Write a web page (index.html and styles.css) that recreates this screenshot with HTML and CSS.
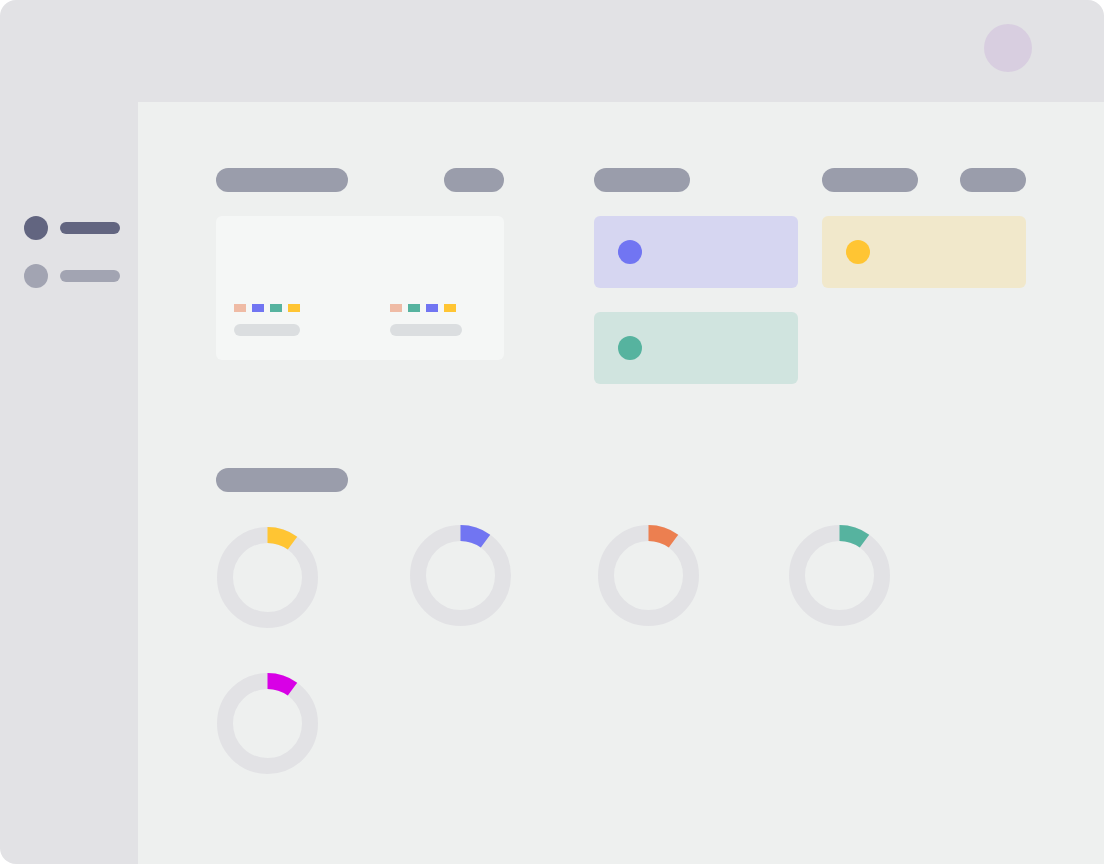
FILE: index.html
```html
<!DOCTYPE html>
<html lang="en">

<head>
    <meta charset="UTF-8">
    <meta name="viewport" content="width=device-width, initial-scale=1.0">
    <title>Dashboard</title>
    <link rel="stylesheet" href="styles.css">
</head>

<body>
    <div class="app">
        <header class="topbar">
            <div class="avatar"></div>
        </header>

        <nav class="sidebar">
            <div class="nav-item active">
                <span class="nav-dot"></span>
                <span class="nav-line"></span>
            </div>
            <div class="nav-item">
                <span class="nav-dot"></span>
                <span class="nav-line"></span>
            </div>
        </nav>

        <main class="main">
            <section class="overview">
                <div class="col col-wide">
                    <div class="col-head">
                        <span class="pill pill-lg"></span>
                        <span class="pill pill-sm"></span>
                    </div>
                    <div class="legend-card">
                        <div class="legend">
                            <div class="swatches">
                                <span class="swatch salmon"></span>
                                <span class="swatch blue"></span>
                                <span class="swatch green"></span>
                                <span class="swatch yellow"></span>
                            </div>
                            <span class="legend-line"></span>
                        </div>
                        <div class="legend">
                            <div class="swatches">
                                <span class="swatch salmon"></span>
                                <span class="swatch green"></span>
                                <span class="swatch blue"></span>
                                <span class="swatch yellow"></span>
                            </div>
                            <span class="legend-line legend-line-wide"></span>
                        </div>
                    </div>
                </div>

                <div class="col">
                    <div class="col-head">
                        <span class="pill pill-md"></span>
                    </div>
                    <div class="stat-card stat-blue"><span class="stat-dot"></span></div>
                    <div class="stat-card stat-green"><span class="stat-dot"></span></div>
                </div>

                <div class="col">
                    <div class="col-head">
                        <span class="pill pill-md"></span>
                        <span class="pill pill-xs"></span>
                    </div>
                    <div class="stat-card stat-yellow"><span class="stat-dot"></span></div>
                </div>
            </section>

            <section class="progress">
                <span class="pill pill-lg"></span>
                <div class="donuts">
                    <svg class="donut donut-yellow first" viewBox="0 0 101 101">
                        <circle class="track" cx="50.5" cy="50.5" r="42.5"></circle>
                        <circle class="arc" cx="50.5" cy="50.5" r="42.5"></circle>
                    </svg>
                    <svg class="donut donut-blue" viewBox="0 0 101 101">
                        <circle class="track" cx="50.5" cy="50.5" r="42.5"></circle>
                        <circle class="arc" cx="50.5" cy="50.5" r="42.5"></circle>
                    </svg>
                    <svg class="donut donut-orange" viewBox="0 0 101 101">
                        <circle class="track" cx="50.5" cy="50.5" r="42.5"></circle>
                        <circle class="arc" cx="50.5" cy="50.5" r="42.5"></circle>
                    </svg>
                    <svg class="donut donut-green" viewBox="0 0 101 101">
                        <circle class="track" cx="50.5" cy="50.5" r="42.5"></circle>
                        <circle class="arc" cx="50.5" cy="50.5" r="42.5"></circle>
                    </svg>
                    <svg class="donut donut-magenta" viewBox="0 0 101 101">
                        <circle class="track" cx="50.5" cy="50.5" r="42.5"></circle>
                        <circle class="arc" cx="50.5" cy="50.5" r="42.5"></circle>
                    </svg>
                </div>
            </section>
        </main>
    </div>
</body>

</html>
```

FILE: styles.css
```css
/* Reset */
* {
    margin: 0;
    padding: 0;
    box-sizing: border-box;
}

body {
    background: #ffffff;
    font-family: 'Roboto', sans-serif;
    width: 1104px;
    height: 864px;
    overflow: hidden;
}

/* App Frame */
.app {
    display: grid;
    grid-template-columns: 138px 1fr;
    grid-template-rows: 102px 1fr;
    width: 1104px;
    height: 864px;
    background: #e2e2e5;
    border-radius: 16px 16px 0 16px;
    overflow: hidden;
}

/* Top Bar */
.topbar {
    grid-column: 1 / 3;
    display: flex;
    justify-content: flex-end;
    padding: 24px 72px 0 0;
}

.avatar {
    width: 48px;
    height: 48px;
    border-radius: 50%;
    background: #d8cee0;
}

/* Sidebar */
.sidebar {
    display: flex;
    flex-direction: column;
    gap: 24px;
    padding: 114px 0 0 24px;
}

.nav-item {
    display: flex;
    align-items: center;
    gap: 12px;
}

.nav-dot {
    width: 24px;
    height: 24px;
    border-radius: 50%;
    background: #a2a4b2;
}

.nav-line {
    width: 60px;
    height: 12px;
    border-radius: 6px;
    background: #a2a4b2;
}

.nav-item.active .nav-dot,
.nav-item.active .nav-line {
    background: #626580;
}

/* Main */
.main {
    background: #eef0ef;
    padding: 66px 0 0 78px;
}

.pill {
    display: block;
    height: 24px;
    border-radius: 12px;
    background: #9a9dab;
}

.pill-lg { width: 132px; }
.pill-md { width: 96px; }
.pill-xs { width: 66px; }
.pill-sm { width: 60px; }

/* Overview */
.overview {
    display: flex;
    gap: 24px;
}

.col {
    display: flex;
    flex-direction: column;
    gap: 24px;
    width: 204px;
}

.col-wide {
    width: 288px;
    margin-right: 66px;
}

.col-head {
    display: flex;
    justify-content: space-between;
}

.legend-card {
    height: 144px;
    display: flex;
    align-items: flex-end;
    gap: 90px;
    padding: 0 18px 24px;
    background: #f5f7f6;
    border-radius: 6px;
}

.legend {
    display: flex;
    flex-direction: column;
    gap: 12px;
}

.swatches {
    display: flex;
    gap: 6px;
}

.swatch {
    width: 12px;
    height: 8px;
}

.swatch.salmon { background: #efbba5; }
.swatch.blue { background: #7175f2; }
.swatch.green { background: #56b39f; }
.swatch.yellow { background: #ffc533; }

.legend-line {
    width: 66px;
    height: 12px;
    border-radius: 6px;
    background: #dbdee0;
}

.legend-line-wide {
    width: 72px;
}

.stat-card {
    height: 72px;
    display: flex;
    align-items: center;
    padding-left: 24px;
    border-radius: 6px;
}

.stat-dot {
    width: 24px;
    height: 24px;
    border-radius: 50%;
}

.stat-blue { background: #d6d6f1; }
.stat-blue .stat-dot { background: #7175f2; }
.stat-green { background: #d0e4df; }
.stat-green .stat-dot { background: #56b39f; }
.stat-yellow { background: #f1e8cb; }
.stat-yellow .stat-dot { background: #ffc533; }

/* Progress */
.progress {
    margin-top: 84px;
}

.donuts {
    display: grid;
    grid-template-columns: 193px 188px 191px 101px;
    row-gap: 45px;
    margin: 33px 0 0 1px;
}

.donut {
    width: 101px;
    height: 101px;
}

.donut.first {
    margin-top: 2px;
}

.donut circle {
    fill: none;
    stroke-width: 16;
}

.donut .track {
    stroke: #e2e2e5;
}

.donut .arc {
    stroke-dasharray: 26.7 300;
    transform: rotate(-90deg);
    transform-origin: 50.5px 50.5px;
}

.donut-yellow .arc { stroke: #ffc533; }
.donut-blue .arc { stroke: #7175f2; }
.donut-orange .arc { stroke: #ec7f50; }
.donut-green .arc { stroke: #56b39f; }
.donut-magenta .arc { stroke: #d800e6; }
```
